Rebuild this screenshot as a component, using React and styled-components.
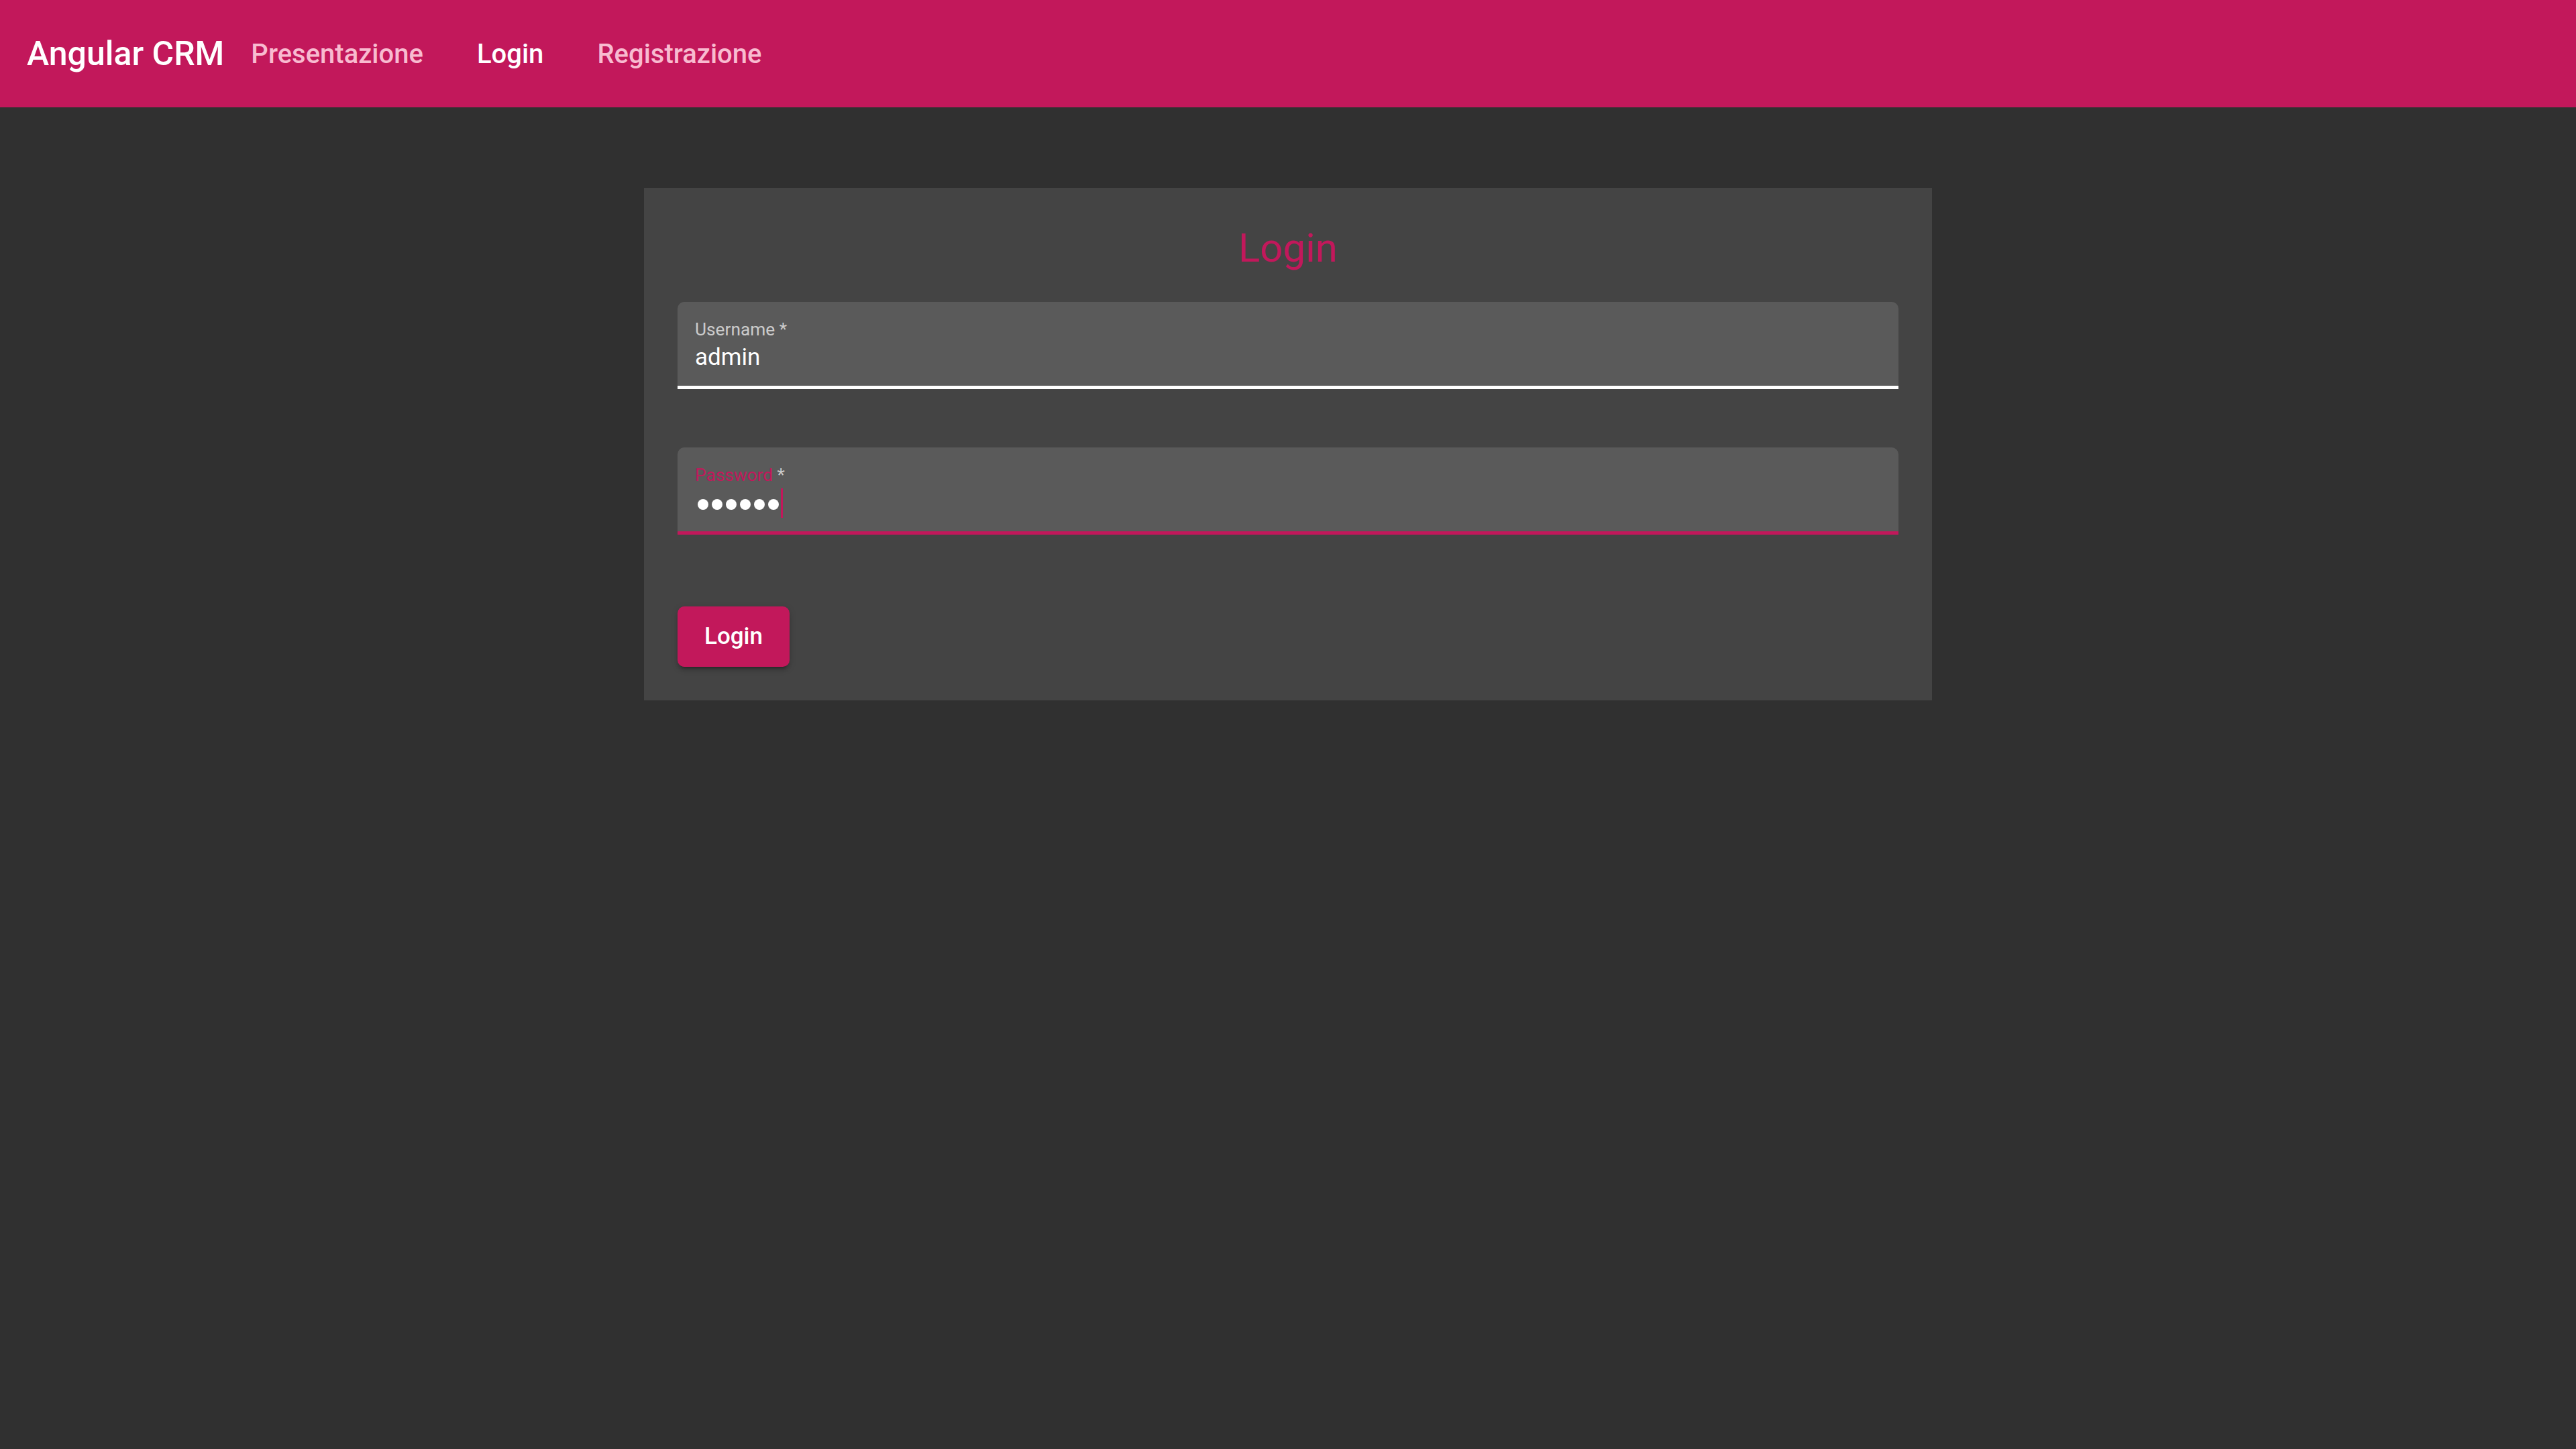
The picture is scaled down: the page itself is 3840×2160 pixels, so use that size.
import React from "react";
import styled, { createGlobalStyle } from "styled-components";

const GlobalStyle = createGlobalStyle`
  html, body {
    margin: 0;
    padding: 0;
    background: #303030;
    font-family: Roboto, "Liberation Sans", sans-serif;
  }
  #root {
    min-height: 100vh;
  }
`;

const Page = styled.div`
  min-height: 100vh;
  background: #303030;
  display: flex;
  flex-direction: column;
`;

const Toolbar = styled.header`
  height: 160px;
  background: #c2185b;
  display: flex;
  align-items: center;
  padding: 0 40px;
  box-sizing: border-box;
`;

const Brand = styled.span`
  color: #fff;
  font-size: 50px;
  font-weight: 500;
  line-height: 80px;
  white-space: nowrap;
`;

const NavLink = styled.a`
  display: inline-flex;
  align-items: center;
  height: 90px;
  padding: 0 40px;
  font-size: 40px;
  font-weight: 500;
  color: ${(props) => (props.active ? "#ffffff" : "#f8bbd0")};
  text-decoration: none;
  white-space: nowrap;
`;

const Main = styled.main`
  display: flex;
  justify-content: center;
  padding-top: 120px;
`;

const Card = styled.form`
  width: 50%;
  background: #444444;
  padding: 50px;
  box-sizing: border-box;
  display: flex;
  flex-direction: column;
`;

const Title = styled.h1`
  margin: 0 0 40px;
  text-align: center;
  color: #c2185b;
  font-size: 60px;
  font-weight: 400;
  line-height: 80px;
`;

const Field = styled.div`
  background: #5a5a5a;
  border-radius: 10px 10px 0 0;
  border-bottom: 5px solid ${(props) => (props.focused ? "#c2185b" : "#ffffff")};
  padding: 26px 26px 22px;
  margin-bottom: ${(props) => props.gap}px;
  display: flex;
  flex-direction: column;
`;

const Label = styled.label`
  font-size: 26.25px;
  line-height: 30px;
  color: ${(props) => (props.focused ? "#c2185b" : "rgba(255, 255, 255, 0.7)")};
  margin-bottom: 7px;
`;

const Required = styled.span`
  color: rgba(255, 255, 255, 0.7);
`;

const Value = styled.div`
  display: flex;
  align-items: flex-start;
  height: 40px;
  font-size: 35px;
  line-height: 40px;
  color: #ffffff;
`;

const Mask = styled.span`
  display: flex;
  gap: 5px;
  margin: 14px 0 0 4px;
`;

const Dot = styled.span`
  width: 16px;
  height: 16px;
  border-radius: 50%;
  background: #ffffff;
`;

const Caret = styled.span`
  width: 3px;
  height: 44px;
  margin: -2px 0 0 3px;
  background: #c2185b;
`;

const Actions = styled.div`
  display: flex;
`;

const Button = styled.button`
  height: 90px;
  padding: 0 40px;
  border: none;
  border-radius: 10px;
  background: #c2185b;
  color: #ffffff;
  font-family: Roboto, "Liberation Sans", sans-serif;
  font-size: 35px;
  font-weight: 500;
  line-height: 90px;
  cursor: pointer;
  box-shadow: 0 7px 3px -5px rgba(0, 0, 0, 0.2), 0 5px 5px 0 rgba(0, 0, 0, 0.14),
    0 3px 12px 0 rgba(0, 0, 0, 0.12);
`;

export default function App() {
  const password = "123456";
  return (
    <Page>
      <GlobalStyle />
      <Toolbar>
        <Brand>Angular CRM</Brand>
        <NavLink href="#">Presentazione</NavLink>
        <NavLink href="#" active>
          Login
        </NavLink>
        <NavLink href="#">Registrazione</NavLink>
      </Toolbar>
      <Main>
        <Card onSubmit={(e) => e.preventDefault()}>
          <Title>Login</Title>
          <Field gap={87}>
            <Label>
              Username <Required>*</Required>
            </Label>
            <Value>admin</Value>
          </Field>
          <Field gap={107} focused>
            <Label focused>
              Password <Required>*</Required>
            </Label>
            <Value>
              <Mask aria-label="password">
                {password.split("").map((_, i) => (
                  <Dot key={i} />
                ))}
              </Mask>
              <Caret />
            </Value>
          </Field>
          <Actions>
            <Button type="submit">Login</Button>
          </Actions>
        </Card>
      </Main>
    </Page>
  );
}
